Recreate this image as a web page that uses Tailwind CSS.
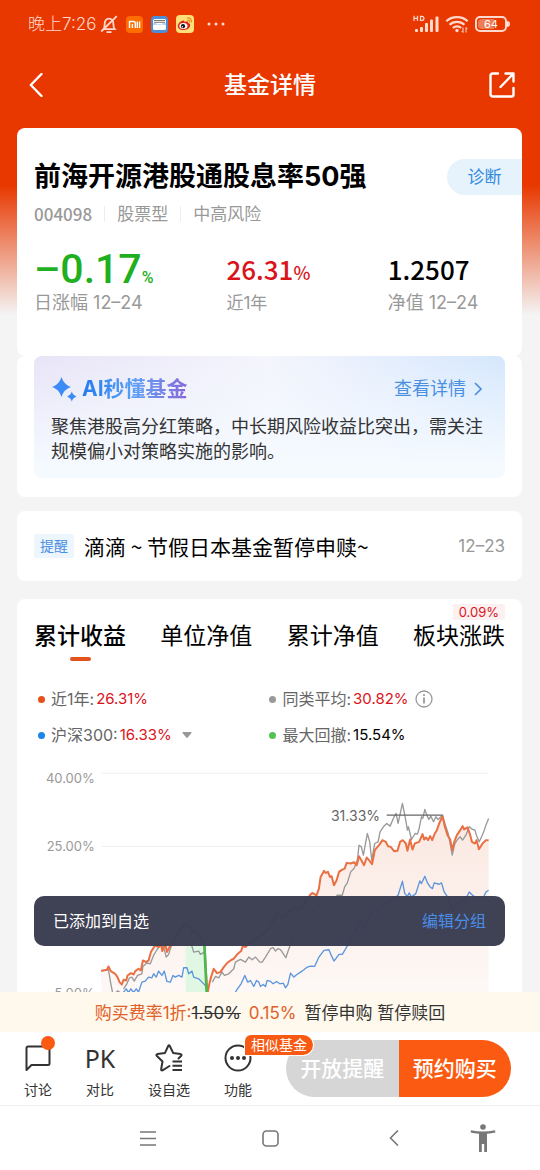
<!DOCTYPE html>
<html lang="zh-CN">
<head>
  <meta charset="UTF-8"/>
  <meta name="viewport" content="width=device-width,initial-scale=1"/>
  <title>基金详情</title>
  <script src="https://cdn.jsdelivr.net/npm/@tailwindcss/browser@4"></script>
</head>
<body class="h-screen flex flex-col overflow-hidden bg-[linear-gradient(to_bottom,#e83800_185px,#f4f4f4_315px)] font-['Inter','Noto_Sans_CJK_SC',sans-serif] text-black">

  <!-- ─── STATUS BAR ─────────────────────────────────────────────────────────── -->
  <div class="h-12 shrink-0 pl-7 pr-[30px] flex items-center justify-between text-[#ffd9cc]">
    <div class="flex items-center">
      <span class="text-[17px] leading-6 font-light">晚上7:26</span>
      <svg class="ml-1 w-[18px] h-[19px]" viewBox="0 0 18 19" fill="none" stroke="currentColor" stroke-width="1.8">
        <path d="M3.500 14.200h11.200c-1-1.200-1.300-2.600-1.300-5.200 0-3.400-1.700-5.400-4.400-5.400S4.700 5.600 4.700 9c0 2.600-.3 4-1.200 5.200zM6.500 17.200h5M16.800 1.200 1.200 16.500"/>
      </svg>
      <svg class="ml-2 w-[17px] h-[17px]" viewBox="0 0 17 17">
        <rect width="17" height="17" rx="4" fill="#ff6d00"/>
        <path d="M3.500 12V5.500h4a1.800 1.800 0 0 1 1.800 1.800V12M6.400 8v4M11.300 5.500V12M13.600 5.500V12" fill="none" stroke="#fff" stroke-width="1.400"/>
      </svg>
      <svg class="ml-2 w-[17px] h-[17px]" viewBox="0 0 17 17">
        <rect width="17" height="17" rx="4" fill="#4a8fd8"/>
        <rect x="2" y="3" width="13" height="11" rx="1.500" fill="#fff"/>
        <path d="M3 4.500h11M3 6.300h11" stroke="#777" stroke-width="1"/>
        <path d="M2 7.500h3.500c.5 2 5.500 2 6 0H15v1H2z" fill="#7aaee6"/>
      </svg>
      <svg class="ml-2 w-[18px] h-[18px]" viewBox="0 0 18 18">
        <rect width="18" height="18" rx="4" fill="#ffdf7a"/>
        <path d="M7.500 5.500c1 0 1 1 .8 1.600 2-.8 4.200-.8 3.900 1 1.600.4 2.300 1.500 1.900 3-.7 2.500-3.600 4-6.700 4-3.200 0-5.600-1.500-5.600-4 0-2.300 3-5.600 5.700-5.600z" fill="#d9261c"/>
        <ellipse cx="7.400" cy="11" rx="4.100" ry="3" fill="#fff"/>
        <circle cx="7" cy="11.200" r="2.100" fill="#111"/>
        <circle cx="6.400" cy="11.800" r=".7" fill="#fff"/>
        <path d="M11.500 3c2.500-.4 4.300 1.400 3.900 4M11.800 5.200c1.200-.1 1.900.6 1.700 1.800" fill="none" stroke="#f08a1d" stroke-width="1.200" stroke-linecap="round"/>
      </svg>
      <svg class="ml-[13px] w-[18px] h-1" viewBox="0 0 18 4" fill="currentColor">
        <circle cx="2" cy="2" r="1.500"/><circle cx="9" cy="2" r="1.500"/><circle cx="16" cy="2" r="1.500"/>
      </svg>
    </div>
    <div class="flex items-center gap-[6px]">
      <svg class="w-[26px] h-[18px]" viewBox="0 0 26 18" fill="currentColor">
        <path d="M1 .800V6M4.500 .800V6M1 3.400h3.500M7.500 1.400v4h1.200c3 0 3-4 0-4z" fill="none" stroke="currentColor" stroke-width="1.200"/>
        <rect x="2" y="14" width="3" height="3" rx="1"/><rect x="7" y="12" width="3" height="5" rx="1"/>
        <rect x="12" y="8" width="3" height="9" rx="1"/><rect x="17" y="4.500" width="3" height="12.500" rx="1"/>
        <rect x="22.500" y="1.500" width="3" height="15.500" rx="1"/>
      </svg>
      <svg class="w-6 h-[18px]" viewBox="0 0 24 18" fill="none" stroke="currentColor" stroke-width="2.200">
        <path d="M1.300 6.200c5.600-5.500 15.800-5.500 21.400 0M4.600 9.800c4-4 10.800-4 14.800 0M7.900 13c2.200-2.300 6-2.300 8.200 0"/>
        <circle cx="12" cy="15.500" r="1.700" fill="currentColor" stroke="none"/>
        <path d="M18 12.500v5M16.600 16l1.400 1.500M21 17.500v-5M22.400 14 21 12.500" stroke-width="1"/>
      </svg>
      <div class="flex items-center">
        <div class="w-8 h-4 p-px rounded-[5px] border-2 border-current">
          <div class="h-full w-full rounded-sm bg-[linear-gradient(to_right,#ee7c55_60%,transparent_60%)] flex items-center justify-center text-[11px] leading-3 text-white">64</div>
        </div>
        <div class="w-[3px] h-[6px] rounded-r bg-[#ffd9cc]"></div>
      </div>
    </div>
  </div>

  <!-- ─── NAVBAR ─────────────────────────────────────────────────────────────── -->
  <header class="h-[74px] mb-[6px] shrink-0 px-6 grid grid-cols-[1fr_auto_1fr] items-center text-white">
    <button aria-label="返回" class="w-6 h-8 flex items-center justify-center">
      <svg class="w-[14px] h-6" viewBox="0 0 14 24" fill="none" stroke="currentColor" stroke-width="2.400" stroke-linecap="round" stroke-linejoin="round">
        <path d="M12.500 1 1.800 12l10.700 11"/>
      </svg>
    </button>
    <h1 class="text-[23px] leading-8 font-medium">基金详情</h1>
    <button aria-label="分享" class="w-7 h-8 justify-self-end flex items-center justify-center">
      <svg class="w-[26px] h-[26px]" viewBox="0 0 26 26" fill="none" stroke="currentColor" stroke-width="2.400" stroke-linecap="round" stroke-linejoin="round">
        <path d="M9 1.500H3.500a2 2 0 0 0-2 2V22a2.500 2.500 0 0 0 2.500 2.500h18.500a2 2 0 0 0 2-2V16M11.500 15 24 2M16.500 1.500h8v8"/>
      </svg>
    </button>
  </header>

  <!-- ─── MAIN CONTENT ───────────────────────────────────────────────────────── -->
  <main class="relative flex-1 min-h-0 flex flex-col">
    <div class="flex-1 min-h-0 overflow-hidden pl-[17px] pr-[18px]">

      <!-- Fund summary -->
      <section class="bg-white rounded-lg pl-[17px] pt-[31px] pb-[41px]">
        <div class="flex items-center justify-between">
          <h2 class="text-[27px] leading-9 font-bold">前海开源港股通股息率50强</h2>
          <button class="h-9 w-[75px] pt-[2px] rounded-l-full bg-[#e6f2fc] text-[17px] text-[#2f8be0]">诊断</button>
        </div>
        <div class="mt-[7px] flex items-center text-[17px] leading-6 text-[#999]">
          <span class="font-['Noto_Sans_CJK_SC'] font-medium">004098</span>
          <span class="ml-3 pl-3 border-l border-[#eee] leading-4">股票型</span>
          <span class="ml-3 pl-3 border-l border-[#eee] leading-4">中高风险</span>
        </div>
        <dl class="mt-[25px] grid grid-cols-[192fr_161fr_134fr]">
          <div class="flex flex-col-reverse">
            <dt class="text-[18px] leading-6 text-[#999]">日涨幅 12–24</dt>
            <dd class="h-10 flex items-baseline font-['Roboto'] text-[41px] leading-9 font-medium text-[#1faf1f]">–0.17<span class="text-[16px]">%</span></dd>
          </div>
          <div class="flex flex-col-reverse">
            <dt class="text-[17px] leading-6 text-[#999]">近1年</dt>
            <dd class="h-10 flex items-baseline font-['Noto_Sans_CJK_SC'] text-[26px] leading-9 font-medium text-[#d9141b]">26.31<span class="text-[18px]">%</span></dd>
          </div>
          <div class="flex flex-col-reverse">
            <dt class="text-[18px] leading-6 text-[#999]">净值 12–24</dt>
            <dd class="h-10 flex items-baseline font-['Noto_Sans_CJK_SC'] text-[26px] leading-9 font-medium">1.2507</dd>
          </div>
        </dl>
      </section>

      <!-- AI summary -->
      <section class="bg-white rounded-lg px-[17px] pb-[19px]">
        <div class="rounded-lg bg-[linear-gradient(to_top,#f5faff_10%,transparent),linear-gradient(to_right,#e8e4f7,#f4f5fd_50%,#d5e7fd)] px-[17px] pt-[19px] pb-[14px]">
          <div class="flex items-center justify-between">
            <h3 class="flex items-center gap-[5px]">
              <svg class="w-[26px] h-[26px]" viewBox="0 0 26 26" fill="#3d8bf5">
                <path d="M10.500 1c1.800 5.200 4 7.800 9.500 10-5.500 2.200-7.700 4.800-9.500 10C8.700 15.800 6.500 13.200 1 11c5.500-2.200 7.700-4.800 9.500-10z"/>
                <path d="M20.800 15.500c.9 2.600 2 3.900 4.700 5-2.700 1.100-3.800 2.400-4.700 5-.9-2.600-2-3.900-4.700-5 2.700-1.100 3.800-2.400 4.700-5z"/>
              </svg>
              <span class="text-[21px] leading-7 font-bold bg-linear-to-r from-[#1f7cf0] via-[#5ba0f5] to-[#8468d8] bg-clip-text text-transparent">AI秒懂基金</span>
            </h3>
            <a href="#" class="flex items-center gap-2 pr-[6px] text-[18px] leading-7 text-[#4a90e2]">查看详情
              <svg class="w-2 h-[14px]" viewBox="0 0 8 14" fill="none" stroke="currentColor" stroke-width="1.600"><path d="m1 1 6 6-6 6"/></svg>
            </a>
          </div>
          <p class="mt-[11px] text-[18px] leading-[25px] text-[#333]">聚焦港股高分红策略，中长期风险收益比突出，需关注规模偏小对策略实施的影响。</p>
        </div>
      </section>

      <!-- Notice -->
      <section class="mt-[14px] h-[70px] bg-white rounded-lg px-[17px] flex items-center">
        <span class="h-6 px-[6px] rounded-xs bg-[#edf5fd] text-[14px] leading-6 text-[#4a90e2]">提醒</span>
        <a href="#" class="ml-[10px] flex-1 font-['Noto_Sans_CJK_SC'] text-[21px] leading-7">滴滴 ~ 节假日本基金暂停申赎~</a>
        <time class="text-[17px] leading-6 text-[#999]">12–23</time>
      </section>

      <!-- Performance -->
      <section class="mt-[18px] bg-white rounded-t-lg px-[17px] pt-[23px]">
        <div role="tablist" class="flex justify-between text-[23px] leading-7">
          <button role="tab" aria-selected="true" class="relative font-medium">累计收益<i class="absolute left-1/2 -ml-[10px] -bottom-[11px] w-[21px] h-1 rounded-full bg-[#e2531d]"></i></button>
          <button role="tab" aria-selected="false">单位净值</button>
          <button role="tab" aria-selected="false">累计净值</button>
          <button role="tab" aria-selected="false" class="relative">板块涨跌<span class="absolute right-0 -top-[18px] h-4 px-[6px] rounded-xs bg-[#fdf0f0] text-[13px] leading-4 text-[#d9141b]">0.09%</span></button>
        </div>

        <div class="mt-[37px] pl-1 grid grid-cols-[231fr_235fr] gap-y-3 text-[16px] leading-6 text-[#666]">
          <div class="flex items-center">
            <i class="mr-[6px] size-[7px] rounded-full bg-[#e8501a]"></i>近1年:<b class="ml-[2px] text-[15px] font-normal text-[#d9141b]">26.31%</b>
          </div>
          <div class="flex items-center">
            <i class="mr-[6px] size-[7px] rounded-full bg-[#999]"></i>同类平均:<b class="ml-[2px] text-[15px] font-normal text-[#d9141b]">30.82%</b>
            <button aria-label="说明" class="ml-[6px]">
              <svg class="size-[18px]" viewBox="0 0 18 18" fill="none" stroke="#999" stroke-width="1.300"><circle cx="9" cy="9" r="8"/><path d="M9 4.200v1.800M9 7.500v6" stroke-width="1.800"/></svg>
            </button>
          </div>
          <button class="flex items-center">
            <i class="mr-[6px] size-[7px] rounded-full bg-[#1a86e8]"></i>沪深300:<b class="ml-[2px] text-[15px] font-normal text-[#d9141b]">16.33%</b>
            <svg class="ml-[10px] w-[10px] h-[6px]" viewBox="0 0 10 6" fill="#999"><path d="M1 0h8q1 0 .5 1L6 5.300q-1 1-2 0L.5 1Q0 0 1 0z"/></svg>
          </button>
          <div class="flex items-center">
            <i class="mr-[6px] size-[7px] rounded-full bg-[#54c254]"></i>最大回撤:<b class="ml-[2px] text-[15px] font-normal text-black">15.54%</b>
          </div>
        </div>

        <!-- Return curves -->
        <svg class="mt-[13px] block w-full" viewBox="102 -60 1410 696" fill="none" stroke-linejoin="round">
          <defs>
            <linearGradient id="area" x1="0" y1="0" x2="0" y2="1">
              <stop offset="0" stop-color="#fbe8e1"/>
              <stop offset="1" stop-color="#fdf8f6"/>
            </linearGradient>
          </defs>
          <path d="M305-20H1463M305 199H1463" stroke="#efefef" stroke-width="3"/>
          <path fill="url(#area)" d="M303 572 320 568 325 558 332 572 345 580 352 590 358 605 365 612 370 598 378 600 382 585 392 578 400 582 405 572 415 565 422 570 428 540 438 545 445 540 452 515 458 505 465 495 525 470 555 430 590 460 612 490 622 636 632 590 640 565 650 578 670 560 690 540 712 520 727 497 760 480 800 450 850 395 900 385 928 345 935 338 948 345 955 325 960 290 970 272 982 275 993 288 1000 315 1015 275 1032 265 1038 248 1060 246 1075 228 1090 255 1098 232 1114 252 1122 210 1145 180 1162 198 1180 213 1190 212 1198 185 1215 190 1228 178 1235 208 1255 185 1265 162 1282 180 1294 180 1308 150 1325 108 1340 165 1354 210 1368 165 1385 138 1400 142 1413 185 1434 207 1463 180V636H303z"/>
          <path d="M556 480h59v156h-59z" fill="#dff7e3"/>
          <path stroke="#5b95dc" stroke-width="4" d="M366 640 378 625 385 636 392 625 400 636 408 625 415 635 425 605 435 602 445 590 455 592 460 580 468 590 475 572 485 585 492 572 500 603 510 605 518 585 525 590 535 585 545 590 550 562 560 562 565 580 575 572 580 590 595 595 605 605 615 615 625 645M700 645 708 630 722 610 733 585 742 605 750 600 760 618 768 600 775 605 780 618 788 612 795 618 800 600 810 603 818 610 828 603 838 610 848 608 855 622 862 612 870 578 880 590 888 583 900 575 910 568 920 560 930 557 942 558 955 530 970 510 985 508 992 525 1000 542 1015 522 1025 522 1035 505 1050 480 1075 430 1095 440 1110 400 1140 380 1180 355 1192 345 1205 303 1212 340 1220 348 1225 338 1232 350 1245 340 1257 302 1262 310 1272 288 1280 308 1288 320 1295 325 1300 308 1315 312 1322 308 1330 335 1340 350 1355 390 1370 370 1395 355 1405 335 1415 345 1430 355 1448 350 1455 335 1463 330"/>
          <path stroke="#999" stroke-width="4" d="M303 570 325 568 332 610 338 640M348 636 352 631 360 636M370 625 380 610 388 592 395 590 402 602 412 585 425 580 428 558 440 548 450 550 460 525 470 508 480 495 490 500 498 530 505 522 515 490 530 460 548 430 560 400 575 440 565 482 575 498 580 515 595 512 600 522 612 515 620 640M636 605 645 588 655 592 665 575 672 585 685 580 700 565 705 545 720 537 735 545 745 530 755 538 765 530 778 545 785 545 795 530 810 505 818 502 825 512 832 505 840 508 848 520 856 532 865 505 875 480 930 400 980 352 995 360 1010 345 1025 345 1032 320 1040 308 1050 275 1060 265 1070 240 1075 195 1082 200 1088 225 1100 160 1107 185 1113 240 1122 190 1132 185 1138 155 1148 140 1158 130 1168 138 1180 110 1186 100 1192 130 1205 70 1213 110 1220 150 1223 140 1232 178 1243 160 1250 162 1255 145 1262 110 1266 115 1272 88 1278 105 1284 118 1290 108 1298 125 1305 110 1312 118 1318 112 1325 105 1332 130 1342 160 1354 225 1362 190 1370 178 1378 170 1385 180 1395 165 1405 140 1415 148 1422 150 1428 170 1435 185 1442 170 1450 150 1456 132 1463 115"/>
          <path stroke="#ea7043" stroke-width="6" d="M303 572 320 568 325 558 332 572 345 580 352 590 358 605 365 612 370 598 378 600 382 585 392 578 400 582 405 572 415 565 422 570 428 540 438 545 445 540 452 515 458 505 465 495 475 500 482 490 486 512 495 490 500 515 508 500 515 490 525 470 540 450 555 430 575 450 590 460 612 490 621 640 628 605 632 590 640 565 650 578 660 575 670 560 680 548 690 540 700 535 712 520 722 512 727 497 735 500 745 490 760 480 780 465 800 450 830 400 850 410 880 380 900 385 928 345 935 338 948 345 955 325 960 290 970 272 975 278 982 275 988 290 993 288 1000 315 1008 300 1015 275 1025 268 1032 265 1038 248 1050 250 1060 246 1068 255 1075 228 1082 240 1090 255 1098 232 1105 240 1114 252 1122 210 1135 195 1145 180 1155 185 1162 198 1170 200 1180 213 1190 212 1198 185 1206 180 1215 190 1220 212 1228 178 1235 208 1242 190 1255 185 1265 162 1270 178 1276 172 1282 180 1288 168 1294 180 1302 160 1308 150 1315 130 1325 108 1332 140 1340 165 1348 178 1354 210 1360 185 1368 165 1378 150 1385 138 1390 148 1400 142 1408 165 1413 185 1422 190 1427 180 1434 207 1445 190 1455 180 1463 180"/>
          <path d="m612 490 7 150" stroke="#4db84d" stroke-width="8"/>
          <path d="M1158 105h167" stroke="#666" stroke-width="4"/>
          <g font-size="39" fill="#999" text-anchor="end">
            <text x="284" y="10">40.00%</text>
            <text x="284" y="213">25.00%</text>
            <text x="284" y="654">-5.00%</text>
            <text x="1138" y="124" font-size="42" fill="#666">31.33%</text>
          </g>
        </svg>
      </section>
    </div>

    <!-- Toast -->
    <div role="status" class="absolute left-[34px] right-[35px] bottom-[46px] h-[50px] px-[19px] rounded-[10px] bg-[#3b3d51]/98 flex items-center justify-between text-[16px] text-white">
      <span>已添加到自选</span>
      <button class="text-[#4a8de6]">编辑分组</button>
    </div>
  </main>

  <!-- ─── FEE STRIP ──────────────────────────────────────────────────────────── -->
  <p class="h-10 pt-1 shrink-0 bg-[#fef9ec] flex items-center justify-center gap-2 text-[17px] text-[#333]">
    <span><span class="text-[#e2602a]">购买费率1折:</span><s>1.50%</s></span>
    <span class="text-[#e2602a]">0.15%</span>
    <span>暂停申购 暂停赎回</span>
  </p>

  <!-- ─── TOOLBAR ────────────────────────────────────────────────────────────── -->
  <footer class="h-[74px] pt-2 shrink-0 bg-white border-b border-[#f0f0f0] pl-6 pr-[29px] flex items-start gap-[34px] text-[14px] leading-5 text-[#333]">
    <button class="relative mt-1 w-7 flex flex-col items-center gap-2">
      <svg class="w-[26px] h-7" viewBox="0 0 26 28" fill="none" stroke="#333" stroke-width="2" stroke-linejoin="round"><path d="M1.500 26V4a1.500 1.500 0 0 1 1.500-1.500h20A1.500 1.500 0 0 1 24.500 4v15.500a1.500 1.500 0 0 1-1.500 1.500H6.500z"/></svg>
      讨论
      <i class="absolute -right-[3px] -top-2 size-[14px] rounded-full bg-[#fb5a12]"></i>
    </button>
    <button class="mt-1 w-7 flex flex-col items-center gap-2">
      <span class="h-7 text-[25px] leading-7 font-['Noto_Sans']">PK</span>
      对比
    </button>
    <button class="mt-1 flex flex-col items-center gap-2">
      <svg class="size-7" viewBox="0 0 28 28" fill="none" stroke="#333" stroke-width="2" stroke-linejoin="round" stroke-linecap="round">
        <path d="M14.500 22 7.500 26.300q-1.500.5-1.300-1.300l1.300-7.500-5.800-5.700q-.9-1.300.7-1.700l7.600-1.200L13.200 2q.8-1.400 1.600 0l3.300 6.900 7.400 1.200q1.700.4.7 1.700l-2.700 2.700"/>
        <path d="M17.500 17.500h9.500M17.500 21.700h9.500M17.500 26h9.500" stroke-linecap="butt"/>
      </svg>
      设自选
    </button>
    <button class="relative mt-1 w-7 flex flex-col items-center gap-2">
      <svg class="size-7" viewBox="0 0 28 28" fill="none" stroke="#333" stroke-width="2"><circle cx="14" cy="14" r="12.500"/><g fill="#333" stroke="none"><circle cx="8" cy="14" r="2"/><circle cx="14" cy="14" r="2"/><circle cx="20" cy="14" r="2"/></g></svg>
      功能
      <span class="absolute z-10 left-[21px] -top-[9px] px-[6px] rounded-[10px] rounded-tl-md rounded-bl-none bg-[#f85a14] ring-1 ring-white whitespace-nowrap text-white">相似基金</span>
    </button>
    <div class="flex-1 h-[57px] flex rounded-full overflow-hidden text-[21px] text-white">
      <button disabled class="flex-1 bg-[#d6d6d6] font-medium">开放提醒</button>
      <button class="flex-1 bg-[#fb5a12] font-medium">预约购买</button>
    </div>
  </footer>

  <!-- ─── SYSTEM NAVIGATION ──────────────────────────────────────────────────── -->
  <nav class="h-16 shrink-0 bg-white pl-[87px] pr-[30px] grid grid-cols-[122fr_122fr_125fr_54fr] items-center justify-items-center">
    <button aria-label="最近任务"><svg class="w-4 h-[15px]" viewBox="0 0 16 15" stroke="#777" stroke-width="1.500"><path d="M0 1h16M0 7.500h16M0 14h16"/></svg></button>
    <button aria-label="主屏幕"><svg class="size-[17px]" viewBox="0 0 17 17" fill="none" stroke="#777" stroke-width="1.600"><rect x="1" y="1" width="15" height="15" rx="3.500"/></svg></button>
    <button aria-label="后退"><svg class="w-[10px] h-4" viewBox="0 0 10 16" fill="none" stroke="#777" stroke-width="1.600"><path d="M9 .5 1.500 8 9 15.500"/></svg></button>
    <button aria-label="无障碍"><svg class="w-[26px] h-7" viewBox="0 0 26 28" fill="#777"><circle cx="13" cy="3" r="2.800"/><path d="M1 6.200c8 1.600 16 1.600 24 0l.4 2.300q-4 .9-8.400 1.200V28h-2.800v-8h-2.400v8H9V9.700Q4.600 9.400.6 8.500z"/></svg></button>
  </nav>
</body>
</html>
